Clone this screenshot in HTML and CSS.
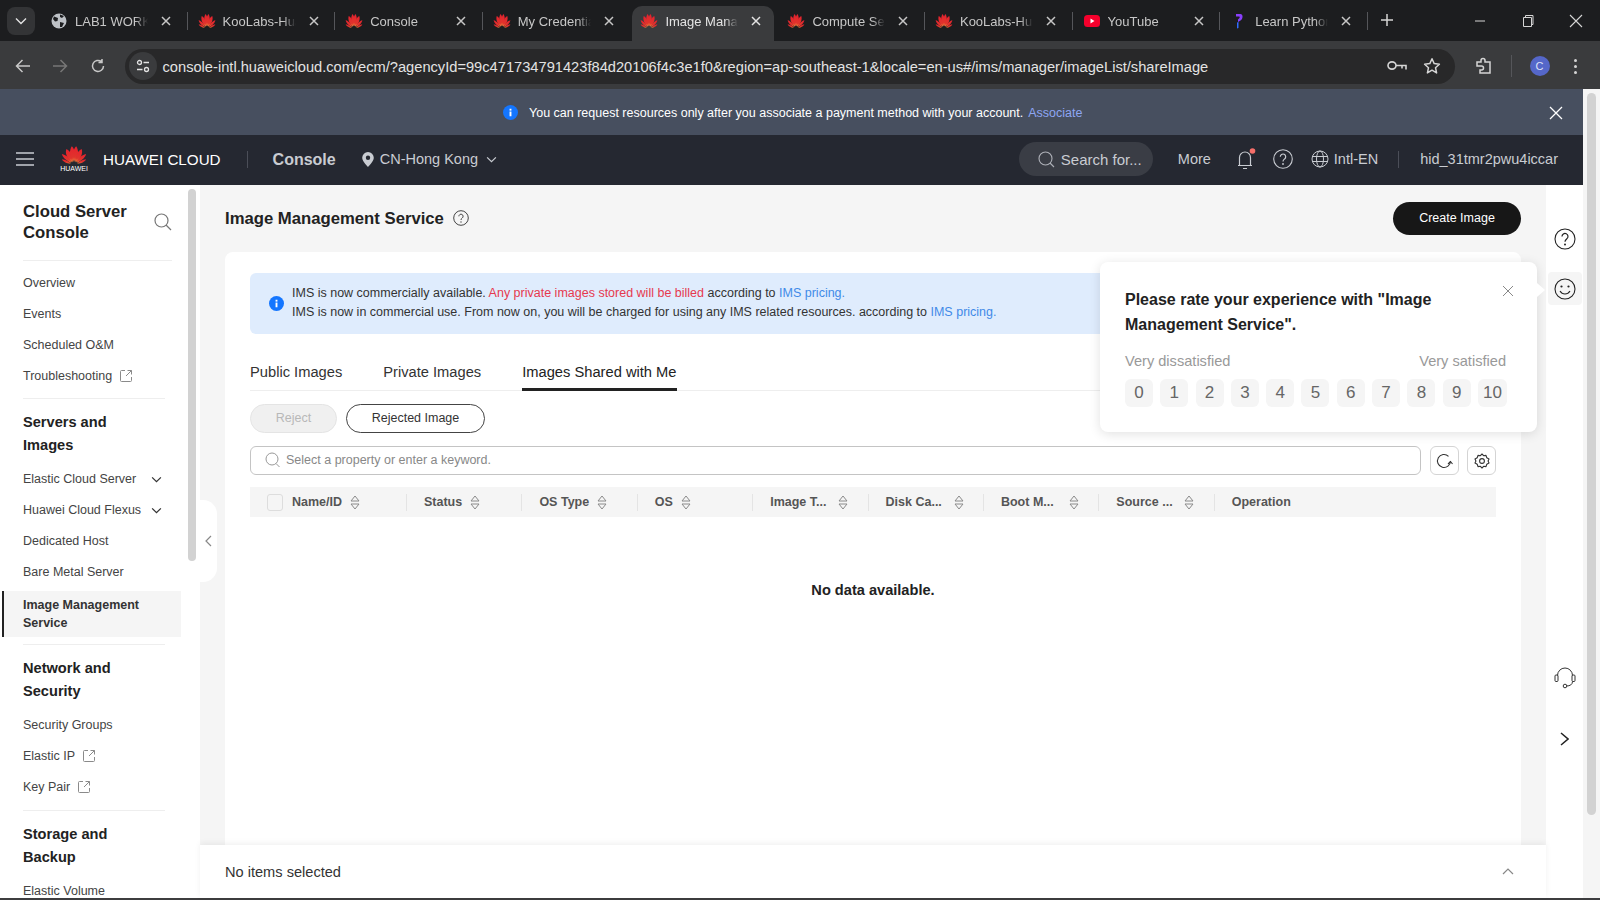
FILE: index.html
```html
<!DOCTYPE html>
<html lang="en">
<head>
  <meta charset="UTF-8" />
  <meta name="viewport" content="width=device-width, initial-scale=1.0" />
  <title>Image Management Service</title>
  <link rel="stylesheet" href="styles.css">
</head>
<body>
  <svg class="defs" width="0" height="0">
    <defs>
      <linearGradient id="hw-grad" x1="0" y1="0" x2="0" y2="1">
        <stop offset="0" stop-color="#e5202e"/>
        <stop offset="0.7" stop-color="#e0342c"/>
        <stop offset="1" stop-color="#f0803c"/>
      </linearGradient>
      <symbol id="huawei" viewBox="0 0 24 22" preserveAspectRatio="none">
        <g id="hw-half" fill="url(#hw-grad)">
          <path d="M11.300 19.500C7.500 14 7.500 6 10 1.500C13 4.500 13.500 13 11.300 19.500Z"/>
          <path d="M10.500 20C5.500 16 3.500 9 5 4.500C9 7 11.500 14 10.500 20Z"/>
          <path d="M9.500 20.500C5 18.500 1.500 14.500 .8 10.500C5 11.500 8.500 16 9.500 20.500Z"/>
          <path d="M9 21.500C5.500 21.500 2 19.500 .8 16.500C4 16.800 7.500 19 9 21.500Z"/>
        </g>
        <g fill="url(#hw-grad)" transform="matrix(-1 0 0 1 24 0)">
          <path d="M11.300 19.500C7.500 14 7.500 6 10 1.500C13 4.500 13.500 13 11.300 19.500Z"/>
          <path d="M10.500 20C5.500 16 3.500 9 5 4.500C9 7 11.500 14 10.500 20Z"/>
          <path d="M9.500 20.500C5 18.500 1.500 14.500 .8 10.500C5 11.500 8.500 16 9.500 20.500Z"/>
          <path d="M9 21.500C5.500 21.500 2 19.500 .8 16.500C4 16.800 7.500 19 9 21.500Z"/>
        </g>
      </symbol>
      <symbol id="ext-link" viewBox="0 0 14 14">
        <path d="M6 1.500H2.500a1 1 0 0 0-1 1v9a1 1 0 0 0 1 1h9a1 1 0 0 0 1-1V8M8.500 1.500h4v4M12.500 1.500L7 7" fill="none" stroke="#8a8a8a" stroke-width="1"/>
      </symbol>
      <symbol id="sort" viewBox="0 0 10 15">
        <path d="M5 1L9 6H1ZM5 14L1 9H9Z" fill="none" stroke="#8a8a8a" stroke-width="1" stroke-linejoin="round"/>
      </symbol>
      <symbol id="chev-down" viewBox="0 0 12 8">
        <path d="M1 1.500L6 6.500L11 1.500" fill="none" stroke="currentColor" stroke-width="1.400"/>
      </symbol>
      <symbol id="tab-x" viewBox="0 0 10 10">
        <path d="M1 1L9 9M9 1L1 9" fill="none" stroke="currentColor" stroke-width="1.500"/>
      </symbol>
    </defs>
  </svg>

  <div class="tabstrip">
    <div class="tab-list-btn"><svg width="12" height="8"><use href="#chev-down"/></svg></div>

    <div class="tab">
      <svg class="favicon" viewBox="0 0 16 16"><circle cx="8" cy="8" r="7.500" fill="#bdc1c6"/><path d="M3 3.500L7 5L6.500 8L4 8.500L2 6ZM9 9L13 10L11 14L9 14ZM9 1.500L13 3L11 5L9 4Z" fill="#1c1d1f"/></svg>
      <span class="tab-title">LAB1 WORKP</span>
      <svg class="tab-close" width="10" height="10"><use href="#tab-x"/></svg>
    </div>
    <span class="tab-sep"></span>
    <div class="tab">
      <svg class="favicon hw"><use href="#huawei"/></svg>
      <span class="tab-title">KooLabs-Hua</span>
      <svg class="tab-close" width="10" height="10"><use href="#tab-x"/></svg>
    </div>
    <span class="tab-sep"></span>
    <div class="tab">
      <svg class="favicon hw"><use href="#huawei"/></svg>
      <span class="tab-title">Console</span>
      <svg class="tab-close" width="10" height="10"><use href="#tab-x"/></svg>
    </div>
    <span class="tab-sep"></span>
    <div class="tab">
      <svg class="favicon hw"><use href="#huawei"/></svg>
      <span class="tab-title">My Credentia</span>
      <svg class="tab-close" width="10" height="10"><use href="#tab-x"/></svg>
    </div>
    <div class="tab active">
      <svg class="favicon hw"><use href="#huawei"/></svg>
      <span class="tab-title">Image Manag</span>
      <svg class="tab-close" width="10" height="10"><use href="#tab-x"/></svg>
    </div>
    <div class="tab">
      <svg class="favicon hw"><use href="#huawei"/></svg>
      <span class="tab-title">Compute Ser</span>
      <svg class="tab-close" width="10" height="10"><use href="#tab-x"/></svg>
    </div>
    <span class="tab-sep"></span>
    <div class="tab">
      <svg class="favicon hw"><use href="#huawei"/></svg>
      <span class="tab-title">KooLabs-Hua</span>
      <svg class="tab-close" width="10" height="10"><use href="#tab-x"/></svg>
    </div>
    <span class="tab-sep"></span>
    <div class="tab">
      <svg class="favicon" viewBox="0 0 16 16"><rect y="2" width="16" height="12" rx="3.500" fill="#f5002c"/><path d="M6.500 5.500L10.500 8L6.500 10.500Z" fill="#fff"/></svg>
      <span class="tab-title">YouTube</span>
      <svg class="tab-close" width="10" height="10"><use href="#tab-x"/></svg>
    </div>
    <span class="tab-sep"></span>
    <div class="tab">
      <svg class="favicon" viewBox="0 0 16 16"><path d="M5 1H9.500C12 1 12.500 5.500 9.500 7.500L7 9V6.500L8.500 5C9 4 8.500 3.500 8 3.500H5Z" fill="#8a3ffc"/><path d="M6 9.500L7.500 9V15L6 15.500Z" fill="#2f6bff"/></svg>
      <span class="tab-title">Learn Python</span>
      <svg class="tab-close" width="10" height="10"><use href="#tab-x"/></svg>
    </div>
    <span class="tab-sep"></span>
    <svg class="new-tab" width="14" height="14" viewBox="0 0 14 14"><path d="M7 1V13M1 7H13" stroke="#d5d5d5" stroke-width="1.500"/></svg>

    <div class="window-btns">
      <div class="window-btn"><svg width="12" height="12" viewBox="0 0 12 12"><path d="M1 6H11" stroke="#d5d5d5"/></svg></div>
      <div class="window-btn"><svg width="12" height="14" viewBox="0 0 12 14"><path d="M1.500 3.500H9.500V12.500H1.500ZM3.500 3.500V1.500H11V10.500H9.500" fill="none" stroke="#d5d5d5"/></svg></div>
      <div class="window-btn"><svg width="14" height="14" viewBox="0 0 14 14"><path d="M1 1L13 13M13 1L1 13" stroke="#d5d5d5" stroke-width="1.100"/></svg></div>
    </div>
  </div>

  <div class="toolbar">
    <div class="nav-btn"><svg width="16" height="14" viewBox="0 0 16 14"><path d="M15 7H2M7.500 1L1.500 7L7.500 13" fill="none" stroke="#c7c7c7" stroke-width="1.500"/></svg></div>
    <div class="nav-btn"><svg width="16" height="14" viewBox="0 0 16 14"><path d="M1 7H14M8.500 1L14.500 7L8.500 13" fill="none" stroke="#777" stroke-width="1.500"/></svg></div>
    <div class="nav-btn"><svg width="16" height="16" viewBox="0 0 16 16"><path d="M13.500 8A5.500 5.500 0 1 1 11.500 3.700M12 1V4.500H8.500" fill="none" stroke="#c7c7c7" stroke-width="1.500"/></svg></div>

    <div class="addressbar">
      <div class="site-info">
        <svg width="14" height="14" viewBox="0 0 14 14"><g fill="none" stroke="#e3e3e3" stroke-width="1.300"><circle cx="3.500" cy="3.500" r="2"/><path d="M7.500 3.500H13M1 10.500H6.500"/><circle cx="10.500" cy="10.500" r="2"/></g></svg>
      </div>
      <span class="url">console-intl.huaweicloud.com/ecm/?agencyId=99c471734791423f84d20106f4c3e1f0&amp;region=ap-southeast-1&amp;locale=en-us#/ims/manager/imageList/shareImage</span>
      <svg class="key-icon" width="20" height="12" viewBox="0 0 20 12"><g fill="none" stroke="#d5d5d5" stroke-width="1.600"><ellipse cx="5" cy="5.500" rx="4" ry="3.600"/><path d="M9 5.500H19V9.500M15 5.500V8.500"/></g></svg>
      <svg class="star-icon" width="18" height="18" viewBox="0 0 18 18"><path d="M9 1.800L11.200 6.600L16.400 7.200L12.500 10.700L13.600 15.900L9 13.200L4.400 15.900L5.500 10.700L1.600 7.200L6.800 6.600Z" fill="none" stroke="#d5d5d5" stroke-width="1.500" stroke-linejoin="round"/></svg>
    </div>

    <div class="ext-btn"><svg width="18" height="18" viewBox="0 0 18 18"><path d="M2 5H6V3.500a2 2 0 0 1 4 0V5H15V16H5V13H6.500a2 2 0 0 0 0-4H2Z" fill="none" stroke="#d5d5d5" stroke-width="1.500"/></svg></div>
    <span class="toolbar-sep"></span>
    <div class="avatar-box"><span class="avatar">C</span></div>
    <div class="menu-btn"><span class="dot"></span><span class="dot"></span><span class="dot"></span></div>
  </div>

  <div class="site">
    <div class="page">
      <div class="banner">
        <svg width="15" height="15" viewBox="0 0 16 16"><circle cx="8" cy="8" r="8" fill="#1476ff"/><rect x="7" y="7" width="2" height="5" fill="#fff"/><rect x="7" y="4" width="2" height="2" fill="#fff"/></svg>
        <span class="banner-text">You can request resources only after you associate a payment method with your account.</span>
        <a class="banner-link">Associate</a>
        <svg class="banner-close" width="14" height="14" viewBox="0 0 14 14"><path d="M1 1L13 13M13 1L1 13" stroke="#fff" stroke-width="1.300"/></svg>
      </div>

      <header class="topbar">
        <svg class="hamburger" width="20" height="16" viewBox="0 0 20 16"><path d="M1 2H19M1 8H19M1 14H19" stroke="#c9ccd2" stroke-width="1.600"/></svg>
        <div class="logo">
          <svg width="26" height="19"><use href="#huawei"/></svg>
          <span class="logo-word">HUAWEI</span>
        </div>
        <span class="brand">HUAWEI CLOUD</span>
        <span class="topbar-sep first"></span>
        <span class="console-link">Console</span>
        <svg class="pin" width="12" height="15" viewBox="0 0 12 15"><path d="M6 0a5.800 5.800 0 0 0-5.800 5.800C.2 9.500 6 15 6 15s5.800-5.500 5.800-9.200A5.800 5.800 0 0 0 6 0Zm0 8a2.200 2.200 0 1 1 0-4.400A2.200 2.200 0 0 1 6 8Z" fill="#c9ccd2"/></svg>
        <span class="region">CN-Hong Kong</span>
        <svg class="region-chev" width="11" height="7"><use href="#chev-down"/></svg>

        <div class="topbar-right">
          <div class="search-pill">
            <svg width="17" height="17" viewBox="0 0 17 17"><circle cx="7.500" cy="7.500" r="6.500" fill="none" stroke="#aeb1b8" stroke-width="1.100"/><path d="M12 12L16 16" stroke="#aeb1b8" stroke-width="1.100"/></svg>
            <span>Search for...</span>
          </div>
          <span class="more">More</span>
          <svg class="bell" width="22" height="24" viewBox="0 0 22 24"><path d="M3 18.500H17M4.500 18.500V10.500a5.500 5.500 0 0 1 11 0V18.500M8 21.500H12" fill="none" stroke="#c9ccd2" stroke-width="1.200"/><circle cx="17.500" cy="4" r="2.800" fill="#f66f6a"/></svg>
          <svg class="top-help" width="20" height="20" viewBox="0 0 20 20"><circle cx="10" cy="10" r="9.300" fill="none" stroke="#c9ccd2" stroke-width="1.100"/><path d="M7.300 7.800a2.700 2.700 0 1 1 4.300 2.100C10.600 10.700 10 11.200 10 12.500" fill="none" stroke="#c9ccd2" stroke-width="1.200"/><circle cx="10" cy="15" r=".9" fill="#c9ccd2"/></svg>
          <svg class="globe" width="18" height="18" viewBox="0 0 18 18"><g fill="none" stroke="#c9ccd2" stroke-width="1"><circle cx="9" cy="9" r="8"/><ellipse cx="9" cy="9" rx="3.500" ry="8"/><path d="M1.500 6.500H16.500M1.500 11.500H16.500"/></g></svg>
          <span class="lang">Intl-EN</span>
          <span class="topbar-sep"></span>
          <span class="username">hid_31tmr2pwu4iccar</span>
        </div>
      </header>

      <div class="app">
        <aside class="sidebar">
          <div class="sidebar-scroll">
            <div class="side-head">
              <span class="side-title">Cloud Server Console</span>
              <svg width="18" height="18" viewBox="0 0 18 18"><circle cx="7.500" cy="7.500" r="6.500" fill="none" stroke="#777" stroke-width="1.200"/><path d="M12 12L17 17" stroke="#777" stroke-width="1.200"/></svg>
            </div>

            <div class="side-group first">
              <a class="side-item">Overview</a>
              <a class="side-item">Events</a>
              <a class="side-item">Scheduled O&amp;M</a>
              <a class="side-item">Troubleshooting <svg class="ext" width="14" height="14"><use href="#ext-link"/></svg></a>
            </div>

            <div class="side-group">
              <div class="side-label">Servers and Images</div>
              <a class="side-item">Elastic Cloud Server <svg class="chev" width="11" height="7"><use href="#chev-down"/></svg></a>
              <a class="side-item">Huawei Cloud Flexus <svg class="chev" width="11" height="7"><use href="#chev-down"/></svg></a>
              <a class="side-item">Dedicated Host</a>
              <a class="side-item">Bare Metal Server</a>
              <a class="side-item current">Image Management Service</a>
            </div>

            <div class="side-group">
              <div class="side-label">Network and Security</div>
              <a class="side-item">Security Groups</a>
              <a class="side-item">Elastic IP <svg class="ext" width="14" height="14"><use href="#ext-link"/></svg></a>
              <a class="side-item">Key Pair <svg class="ext" width="14" height="14"><use href="#ext-link"/></svg></a>
            </div>

            <div class="side-group">
              <div class="side-label">Storage and Backup</div>
              <a class="side-item">Elastic Volume</a>
            </div>
          </div>
          <div class="side-thumb"></div>
        </aside>

        <main class="main">
          <div class="collapse-tab">
            <svg width="7" height="12" viewBox="0 0 7 12"><path d="M6 1L1 6L6 11" fill="none" stroke="#888" stroke-width="1.200"/></svg>
          </div>

          <div class="main-head">
            <h1 class="main-title">Image Management Service</h1>
            <svg class="title-help" width="16" height="16" viewBox="0 0 16 16"><circle cx="8" cy="8" r="7.300" fill="none" stroke="#444" stroke-width="1"/><path d="M5.900 6.300a2.100 2.100 0 1 1 3.300 1.700C8.400 8.600 8 9 8 10" fill="none" stroke="#444"/><circle cx="8" cy="12" r=".7" fill="#444"/></svg>
            <button class="create-btn">Create Image</button>
          </div>

          <section class="card">
            <div class="notice">
              <svg width="15" height="15" viewBox="0 0 16 16"><circle cx="8" cy="8" r="8" fill="#1476ff"/><rect x="7" y="7" width="2" height="5" fill="#fff"/><rect x="7" y="4" width="2" height="2" fill="#fff"/></svg>
              <div class="notice-text">
                <div>IMS is now commercially available. <span class="red">Any private images stored will be billed</span> according to <a class="blue">IMS pricing.</a></div>
                <div>IMS is now in commercial use. From now on, you will be charged for using any IMS related resources. according to <a class="blue">IMS pricing.</a></div>
              </div>
            </div>

            <div class="img-tabs">
              <a class="img-tab">Public Images</a>
              <a class="img-tab">Private Images</a>
              <a class="img-tab selected">Images Shared with Me</a>
            </div>

            <div class="actions">
              <button class="pill disabled">Reject</button>
              <button class="pill">Rejected Image</button>
            </div>

            <div class="filter-row">
              <div class="filter-input">
                <svg width="16" height="16" viewBox="0 0 16 16"><circle cx="7" cy="7" r="6" fill="none" stroke="#999"/><path d="M11 11.500L14.500 15" stroke="#999"/></svg>
                <span>Select a property or enter a keyword.</span>
              </div>
              <div class="square-btn"><svg width="18" height="18" viewBox="0 0 18 18"><path d="M15.500 9A6.500 6.500 0 1 1 13.500 4.300" fill="none" stroke="#333" stroke-width="1.100"/><path d="M13 12L15.500 9.500L17.500 12" fill="none" stroke="#333" stroke-width="1.100"/></svg></div>
              <div class="square-btn"><svg width="16" height="16" viewBox="0 0 16 16"><g fill="none" stroke="#333" stroke-width="1.100"><path d="M8 1L9.600 2.700L12 2.400L12.800 4.700L15 6L14.100 8L15 10L12.800 11.300L12 13.600L9.600 13.300L8 15L6.400 13.300L4 13.600L3.200 11.300L1 10L1.900 8L1 6L3.200 4.700L4 2.400L6.400 2.700Z" stroke-linejoin="round"/><circle cx="8" cy="8" r="2.400"/></g></svg></div>
            </div>

            <div class="table-head">
              <div class="th first"><span class="checkbox"></span>Name/ID <svg class="sort" width="10" height="15"><use href="#sort"/></svg></div>
              <div class="th">Status <svg class="sort" width="10" height="15"><use href="#sort"/></svg></div>
              <div class="th">OS Type <svg class="sort" width="10" height="15"><use href="#sort"/></svg></div>
              <div class="th">OS <svg class="sort" width="10" height="15"><use href="#sort"/></svg></div>
              <div class="th"><span class="th-clip">Image T...</span><svg class="sort" width="10" height="15"><use href="#sort"/></svg></div>
              <div class="th"><span class="th-clip">Disk Ca...</span><svg class="sort" width="10" height="15"><use href="#sort"/></svg></div>
              <div class="th"><span class="th-clip">Boot M...</span><svg class="sort" width="10" height="15"><use href="#sort"/></svg></div>
              <div class="th"><span class="th-clip">Source ...</span><svg class="sort" width="10" height="15"><use href="#sort"/></svg></div>
              <div class="th">Operation</div>
            </div>

            <div class="no-data">No data available.</div>
          </section>

          <div class="bottom-bar">
            <span>No items selected</span>
            <svg width="12" height="7" viewBox="0 0 12 7"><path d="M1 6L6 1L11 6" fill="none" stroke="#888" stroke-width="1.200"/></svg>
          </div>

          <div class="rate-pop">
            <svg class="rate-close" width="12" height="12" viewBox="0 0 12 12"><path d="M1 1L11 11M11 1L1 11" stroke="#888" stroke-width="1"/></svg>
            <div class="rate-title">Please rate your experience with "Image Management Service".</div>
            <div class="rate-labels"><span>Very dissatisfied</span><span>Very satisfied</span></div>
            <div class="rate-scores">
              <span class="score">0</span>
              <span class="score">1</span>
              <span class="score">2</span>
              <span class="score">3</span>
              <span class="score">4</span>
              <span class="score">5</span>
              <span class="score">6</span>
              <span class="score">7</span>
              <span class="score">8</span>
              <span class="score">9</span>
              <span class="score wide">10</span>
            </div>
          </div>
        </main>

        <aside class="rail">
          <div class="rail-btn help">
            <svg width="22" height="22" viewBox="0 0 22 22"><circle cx="11" cy="11" r="10" fill="none" stroke="#222" stroke-width="1.100"/><path d="M8 8.500a3 3 0 1 1 4.800 2.300C11.700 11.700 11 12.200 11 13.700" fill="none" stroke="#222" stroke-width="1.200"/><circle cx="11" cy="16.500" r="1" fill="#222"/></svg>
          </div>
          <div class="rail-btn smile">
            <svg width="22" height="22" viewBox="0 0 22 22"><circle cx="11" cy="11" r="10" fill="none" stroke="#222" stroke-width="1.100"/><circle cx="7.500" cy="8.500" r="1.100" fill="#222"/><circle cx="14.500" cy="8.500" r="1.100" fill="#222"/><path d="M6 13c1.200 2 3 3 5 3s3.800-1 5-3" fill="none" stroke="#222" stroke-width="1.100"/></svg>
          </div>
          <div class="rail-btn headset">
            <svg width="24" height="24" viewBox="0 0 24 24"><g fill="none" stroke="#333" stroke-width="1"><path d="M4.500 9.500a7.500 7.500 0 0 1 15 0"/><rect x="2" y="9" width="3" height="6.500" rx="1"/><rect x="19" y="9" width="3" height="6.500" rx="1"/><path d="M19.500 15.500c0 3-2.500 4.500-6 4.500"/><circle cx="12" cy="20" r="1.800"/></g></svg>
          </div>
          <div class="rail-btn next">
            <svg width="9" height="14" viewBox="0 0 9 14"><path d="M1 1L8 7L1 13" fill="none" stroke="#222" stroke-width="1.500"/></svg>
          </div>
        </aside>
      </div>
    </div>

    <div class="page-scroll"><div class="page-thumb"></div></div>
  </div>

  <div class="window-edge"></div>
</body>
</html>
```

FILE: styles.css
```css
* {
  box-sizing: border-box;
}

html, body {
  height: 100%;
}

body {
  margin: 0;
  display: flex;
  flex-direction: column;
  overflow: hidden;
  font-family: 'Liberation Sans', Arial, sans-serif;
  font-size: 12.5px;
  color: #333;
  background: #fff;
}

.defs {
  position: absolute;
}

a {
  text-decoration: none;
}

/* browser tabs */
.tabstrip {
  height: 41px;
  flex: none;
  display: flex;
  align-items: flex-start;
  padding-left: 7px;
  background: #1c1d1f;
  color: #c7c7c7;
  font-size: 13px;
}

.tab-list-btn {
  width: 28px;
  height: 28px;
  margin: 7px 5px 0 0;
  display: flex;
  align-items: center;
  justify-content: center;
  border-radius: 8px;
  background: #333436;
  color: #e3e3e3;
}

.tab {
  width: 146.6px;
  height: 35px;
  margin-top: 6px;
  padding: 0 0 5px 11px;
  display: flex;
  align-items: center;
  flex: none;
}

.tab.active {
  width: 142px;
  margin-left: 3px;
  margin-right: 3px;
  padding-left: 9px;
  background: #3a3b3d;
  border-radius: 10px 10px 0 0;
  color: #e3e3e3;
}

.favicon {
  width: 16px;
  height: 16px;
  flex: none;
}

.favicon.hw {
  width: 18px;
  height: 15px;
  margin: -2px -1px 0;
}

.tab-title {
  width: 73px;
  margin-left: 8px;
  flex: none;
  overflow: hidden;
  white-space: nowrap;
  -webkit-mask-image: linear-gradient(to right, #000 82%, transparent);
  mask-image: linear-gradient(to right, #000 82%, transparent);
}

.tab-close {
  margin-left: 13px;
  flex: none;
}

.tab-sep {
  width: 1px;
  height: 18px;
  margin-top: 12px;
  flex: none;
  background: #55565a;
}

.new-tab {
  margin: 13px 0 0 12px;
}

.window-btns {
  margin-left: auto;
  display: flex;
}

.window-btn {
  width: 48px;
  height: 41px;
  display: flex;
  align-items: center;
  justify-content: center;
}

/* browser toolbar */
.toolbar {
  height: 48px;
  flex: none;
  display: flex;
  align-items: center;
  padding: 2px 0 0 4px;
  background: #3a3b3d;
}

.nav-btn {
  width: 37.500px;
  display: flex;
  justify-content: center;
}

.addressbar {
  width: 1330px;
  height: 35px;
  margin-left: 8px;
  padding: 0 14px 0 4px;
  display: flex;
  align-items: center;
  border-radius: 18px;
  background: #282829;
}

.site-info {
  width: 28px;
  height: 28px;
  display: flex;
  align-items: center;
  justify-content: center;
  border-radius: 50%;
  background: #3a3b3d;
}

.url {
  margin: 1px 0 0 6px;
  font-size: 14.67px;
  color: #e3e3e3;
  white-space: nowrap;
}

.key-icon {
  margin-left: auto;
  margin-right: 16px;
}

.ext-btn {
  width: 36px;
  margin-left: 11px;
  display: flex;
  justify-content: center;
}

.toolbar-sep {
  width: 1px;
  height: 22px;
  margin-left: 9px;
  background: #55565a;
}

.avatar-box {
  width: 36px;
  margin-left: 10px;
  display: flex;
  justify-content: center;
}

.avatar {
  width: 20px;
  height: 20px;
  display: flex;
  align-items: center;
  justify-content: center;
  border-radius: 50%;
  background: #5567c9;
  color: #dfe3f7;
  font-size: 11px;
}

.menu-btn {
  width: 36px;
  display: flex;
  flex-direction: column;
  align-items: center;
  gap: 3px;
}

.dot {
  width: 3px;
  height: 3px;
  border-radius: 50%;
  background: #d5d5d5;
}

/* page */
.site {
  flex: 1;
  min-height: 0;
  display: flex;
}

.page {
  flex: 1;
  min-width: 0;
  display: flex;
  flex-direction: column;
}

.page-scroll {
  width: 17px;
  flex: none;
  padding: 4px 4px 0;
  background: #f5f5f5;
}

.page-thumb {
  width: 9px;
  height: 722px;
  border-radius: 5px;
  background: #d2d2d2;
}

.window-edge {
  height: 2px;
  flex: none;
  background: #3d3d3f;
}

.banner {
  height: 46px;
  flex: none;
  padding: 1px 0 0 503px;
  display: flex;
  align-items: center;
  background: #474f5f;
  color: #fff;
}

.banner-text {
  margin-left: 11px;
}

.banner-link {
  margin-left: 5px;
  color: #8ea6f2;
}

.banner-close {
  margin-left: auto;
  margin-right: 20px;
}

.topbar {
  height: 50px;
  flex: none;
  display: flex;
  align-items: center;
  padding: 0 25px 2px 15px;
  background: #252831;
  color: #c9ccd2;
  font-size: 14.5px;
}

.logo {
  width: 30px;
  margin-left: 24px;
  display: flex;
  flex-direction: column;
  align-items: center;
}

.logo-word {
  margin-top: 1px;
  font-size: 7px;
  line-height: 8px;
  color: #fff;
}

.brand {
  margin-left: 14px;
  font-size: 15.2px;
  color: #fff;
}

.topbar-sep {
  width: 1px;
  height: 17px;
  background: #4b4e58;
}

.topbar-sep.first {
  margin-left: 26px;
}

.console-link {
  margin: 2px 0 0 25px;
  font-size: 16px;
  font-weight: bold;
}

.pin {
  margin-left: 26px;
}

.region {
  margin-left: 6px;
}

.region-chev {
  margin-left: 8px;
}

.topbar-right {
  margin-left: auto;
  display: flex;
  align-items: center;
}

.search-pill {
  width: 134px;
  height: 34px;
  padding-left: 19px;
  display: flex;
  align-items: center;
  gap: 6px;
  border-radius: 17px;
  background: #3a3d45;
  font-size: 15px;
  white-space: nowrap;
}

.more {
  margin-left: 25px;
}

.bell {
  margin-left: 24px;
}

.top-help {
  margin-left: 16px;
}

.globe {
  margin-left: 18px;
}

.lang {
  margin-left: 5px;
}

.lang + .topbar-sep {
  margin-left: 20px;
}

.username {
  margin-left: 21px;
}

.app {
  flex: 1;
  min-height: 0;
  display: flex;
}

/* left menu */
.sidebar {
  width: 200px;
  flex: none;
  display: flex;
  background: #fff;
  overflow: hidden;
}

.sidebar-scroll {
  width: 188px;
  flex: none;
  padding-top: 16px;
}

.side-thumb {
  width: 8px;
  height: 372px;
  margin-top: 4px;
  border-radius: 4px;
  background: #d2d2d2;
}

.side-head {
  margin: 0 16px 0 23px;
  padding-bottom: 17px;
  display: flex;
  align-items: center;
  justify-content: space-between;
  border-bottom: 1px solid #eee;
}

.side-title {
  width: 120px;
  font-size: 16.7px;
  line-height: 21px;
  font-weight: bold;
  color: #222;
}

.side-group {
  padding-top: 11.5px;
}

.side-group.first {
  padding-top: 6px;
}

.side-group::after {
  content: "";
  display: block;
  height: 1px;
  margin: 7.5px 23px 0;
  background: #eee;
}

.side-group.first::after {
  margin-top: 7px;
}

.side-group:last-child::after {
  display: none;
}

.side-label {
  width: 120px;
  margin-left: 23px;
  margin-bottom: 7px;
  font-size: 14.6px;
  line-height: 23px;
  font-weight: bold;
  color: #222;
}

.side-item {
  height: 31px;
  padding: 0 26px 0 23px;
  display: flex;
  align-items: center;
  color: #444;
  white-space: nowrap;
}

.side-item .ext {
  margin-left: 7px;
}

.side-item .chev {
  margin-left: auto;
  flex: none;
  color: #333;
}

.side-item.current {
  width: 179px;
  height: 46px;
  margin: 3px 0 0 2px;
  padding: 0 30px 0 19px;
  border-left: 2px solid #222;
  background: #f5f5f5;
  font-weight: bold;
  line-height: 18px;
  white-space: normal;
  color: #333;
}

/* content */
.main {
  flex: 1;
  min-width: 0;
  position: relative;
  display: flex;
  flex-direction: column;
  background: #f5f5f5;
}

.collapse-tab {
  position: absolute;
  left: 0;
  top: 315px;
  width: 17px;
  height: 82px;
  display: flex;
  align-items: center;
  justify-content: center;
  background: #fff;
  border-radius: 0 14px 14px 0;
}

.main-head {
  height: 67px;
  flex: none;
  padding: 17px 25px 0;
  display: flex;
  align-items: flex-start;
}

.main-title {
  margin: 0;
  height: 33px;
  line-height: 33px;
  font-size: 16.7px;
  font-weight: bold;
  color: #222;
}

.title-help {
  margin: 8px 0 0 9px;
}

.create-btn {
  width: 128px;
  height: 33px;
  margin-left: auto;
  padding-bottom: 2px;
  border: none;
  border-radius: 17px;
  background: #171717;
  color: #fff;
  font-family: inherit;
  font-size: 12.5px;
}

.card {
  flex: 1;
  min-height: 0;
  margin: 0 25px;
  padding: 21px 25px 0;
  overflow: hidden;
  background: #fff;
  border-radius: 8px 8px 0 0;
}

.notice {
  height: 61px;
  padding-left: 19px;
  display: flex;
  align-items: center;
  gap: 8px;
  border-radius: 6px;
  background: #dfecfd;
}

.notice-text {
  margin-top: -1px;
  line-height: 19px;
  color: #333;
}

.red {
  color: #e6394f;
}

.blue {
  color: #3f8ae8;
}

.img-tabs {
  height: 37px;
  margin-top: 20px;
  display: flex;
  gap: 41px;
  border-bottom: 1px solid #eee;
}

.img-tab {
  height: 37px;
  padding-top: 9px;
  font-size: 14.7px;
  line-height: 18px;
  color: #333;
}

.img-tab.selected {
  border-bottom: 3px solid #222;
  color: #222;
}

.actions {
  margin-top: 13px;
  display: flex;
  gap: 9px;
}

.pill {
  width: 139px;
  height: 29px;
  padding: 0 0 1px;
  border: 1px solid #444;
  border-radius: 15px;
  background: #fff;
  color: #333;
  font-family: inherit;
  font-size: 12.5px;
}

.pill.disabled {
  width: 87px;
  border-color: #e4e4e4;
  background: #f0f0f0;
  color: #b8b8b8;
}

.filter-row {
  margin-top: 13px;
  display: flex;
  gap: 8.5px;
}

.filter-input {
  width: 1171px;
  height: 29px;
  padding: 0 0 2px 14px;
  display: flex;
  align-items: center;
  gap: 5px;
  border: 1px solid #c4c4c4;
  border-radius: 6px;
  color: #888;
}

.square-btn {
  width: 29px;
  height: 29px;
  display: flex;
  align-items: center;
  justify-content: center;
  border: 1px solid #d4d4d4;
  border-radius: 6px;
}

.table-head {
  height: 30px;
  margin-top: 12px;
  display: grid;
  grid-template-columns: 156px repeat(7, 115.4px) 1fr;
  align-items: center;
  background: #f5f5f5;
}

.th {
  height: 17px;
  padding-left: 17px;
  display: flex;
  align-items: center;
  border-left: 1px solid #e4e4e4;
  font-size: 12.5px;
  font-weight: bold;
  color: #555;
  white-space: nowrap;
}

.th.first {
  border-left: none;
}

.th-clip {
  width: 60px;
  flex: none;
}

.checkbox {
  width: 16px;
  height: 17px;
  margin-right: 9px;
  border: 1px solid #ddd;
  border-radius: 3px;
  background: #f5f5f5;
}

.sort {
  margin-left: 8px;
}

.no-data {
  margin-top: 61px;
  text-align: center;
  font-size: 14.6px;
  line-height: 24px;
  font-weight: bold;
  color: #222;
}

.bottom-bar {
  height: 53px;
  flex: none;
  padding: 0 32px 0 25px;
  display: flex;
  align-items: center;
  justify-content: space-between;
  background: #fff;
  box-shadow: 0 -2px 6px rgba(0, 0, 0, 0.06);
  font-size: 14.6px;
  color: #333;
}

/* rating popover */
.rate-pop {
  position: absolute;
  top: 77px;
  right: 9px;
  width: 437px;
  height: 170px;
  padding: 25px 30px 0 25px;
  background: #fff;
  border-radius: 8px;
  box-shadow: 0 2px 12px rgba(0, 0, 0, 0.12);
}

.rate-pop::after {
  content: "";
  position: absolute;
  right: -8px;
  top: 21px;
  border-left: 8px solid #fff;
  border-top: 7px solid transparent;
  border-bottom: 7px solid transparent;
}

.rate-close {
  position: absolute;
  top: 23px;
  right: 23px;
}

.rate-title {
  width: 340px;
  font-size: 16px;
  line-height: 25px;
  font-weight: bold;
  color: #222;
}

.rate-labels {
  margin: 15px 1px 0 0;
  display: flex;
  justify-content: space-between;
  font-size: 14.6px;
  line-height: 18px;
  color: #999;
}

.rate-scores {
  margin-top: 9px;
  display: flex;
  justify-content: space-between;
}

.score {
  width: 28px;
  height: 28px;
  display: flex;
  align-items: center;
  justify-content: center;
  border-radius: 6px;
  background: #f5f5f5;
  font-size: 17px;
  color: #666;
}

.score.wide {
  width: 29px;
}

/* right rail */
.rail {
  width: 37px;
  flex: none;
  display: flex;
  flex-direction: column;
  align-items: center;
  background: #fff;
}

.rail-btn {
  width: 34px;
  display: flex;
  align-items: center;
  justify-content: center;
}

.rail-btn.help {
  height: 34px;
  margin-top: 37px;
}

.rail-btn.smile {
  height: 33px;
  margin-top: 16px;
  border-radius: 4px;
  background: #f5f5f5;
}

.rail-btn.headset {
  height: 34px;
  margin-top: 356px;
}

.rail-btn.next {
  height: 34px;
  margin-top: 27px;
}
```
